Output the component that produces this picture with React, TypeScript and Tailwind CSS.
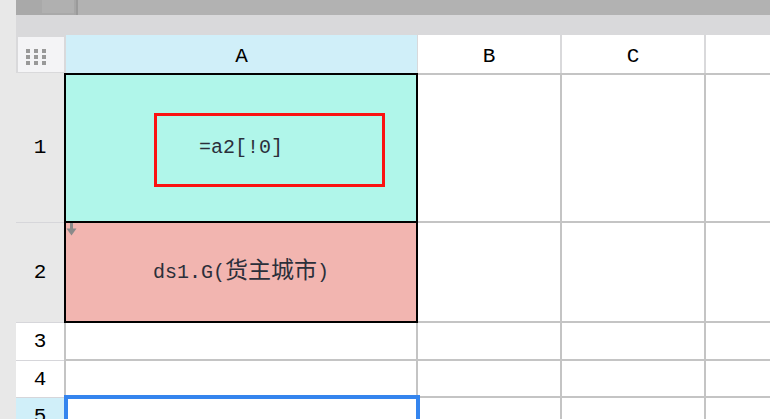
import React from "react";

const mono = "font-['Liberation_Mono','Noto_Sans_CJK_SC',monospace]";

const RowHead: React.FC<{ n: number; bg: string; h: string }> = ({ n, bg, h }) => (
  <div
    className={`flex w-12 shrink-0 items-center justify-center border-b border-[#d6d6da] text-[21px] leading-none text-black ${bg} ${h} ${mono}`}
  >
    {n}
  </div>
);

const ArrowDown: React.FC = () => (
  <svg width="11" height="13" viewBox="0 0 11 13" className="absolute left-0 top-0">
    <rect x="4" y="0" width="3" height="9" fill="#8a8a8a" />
    <polygon points="0.5,5.5 10.5,5.5 5.5,12.5" fill="#8a8a8a" />
  </svg>
);

const App: React.FC = () => {
  return (
    <div className="flex h-[419px] w-[770px] overflow-hidden bg-[#e8e8e8]">
      {/* left strip */}
      <div className="w-4 shrink-0 bg-[#e8e8e8]" />

      <div className="flex flex-1 flex-col">
        {/* toolbar remnant */}
        <div className="flex h-[15px] shrink-0 bg-[#b2b2b2]">
          <div className="w-[26px] bg-[#a9a9a9]" />
          <div className="flex w-[32px] flex-col bg-[#a9a9a9]">
            <div className="h-[13px] bg-[#b0b0b0]" />
          </div>
          <div className="w-[2px] bg-[#a6a6a6]" />
          <div className="w-[2px] bg-[#9a9a9a]" />
        </div>
        <div className="h-5 shrink-0 bg-[#d9d9db]" />

        {/* column header */}
        <div className={`flex h-[38px] shrink-0 bg-[#d9d9db] text-[21px] leading-none text-black ${mono}`}>
          <div className="mb-[1px] ml-[2px] mt-[2px] w-[46px] bg-[#f4f4f6] pl-2 pt-3">
            <div className="grid w-fit grid-cols-3 gap-x-1 gap-y-[2px]">
              {Array.from({ length: 9 }).map((_, i) => (
                <div key={i} className="h-1 w-1 bg-[#999999]" />
              ))}
            </div>
          </div>
          <div className="ml-[2px] flex w-[351px] items-center justify-center bg-[#d0eff9] pt-1">A</div>
          <div className="ml-[1px] flex w-[142px] items-center justify-center bg-white pt-1">B</div>
          <div className="ml-[2px] flex w-[142px] items-center justify-center bg-white pt-1">C</div>
          <div className="ml-[2px] flex-1 bg-white" />
        </div>

        {/* row 1 */}
        <div className="flex h-[150px] shrink-0">
          <RowHead n={1} bg="bg-[#e8e8e8]" h="h-[150px]" />
          <div className="relative flex w-[354px] items-center justify-center border-2 border-black bg-[#b0f6ea]">
            <span className={`text-[20px] leading-none text-[#2b2f3a] ${mono}`}>=a2[!0]</span>
            <div className="absolute left-[88px] top-[38px] h-[74px] w-[231px] border-[3px] border-[#fb1212]" />
          </div>
          <div className="w-[144px] border-y-2 border-r-2 border-[#c4c4c4] bg-white" />
          <div className="w-[144px] border-y-2 border-r-2 border-[#c4c4c4] bg-white" />
          <div className="flex-1 border-y-2 border-[#c4c4c4] bg-white" />
        </div>

        {/* row 2 */}
        <div className="flex h-[100px] shrink-0">
          <RowHead n={2} bg="bg-[#e8e8e8]" h="h-[100px]" />
          <div className="relative flex w-[354px] items-center justify-center border-x-2 border-b-2 border-black bg-[#f2b5b0]">
            <ArrowDown />
            <span className={`text-[20px] leading-none text-[#2b2f3a] ${mono}`}>
              ds1.G(<span className="text-[23px]">货主城市</span>)
            </span>
          </div>
          <div className="w-[144px] border-b-2 border-r-2 border-[#c4c4c4] bg-white" />
          <div className="w-[144px] border-b-2 border-r-2 border-[#c4c4c4] bg-white" />
          <div className="flex-1 border-b-2 border-[#c4c4c4] bg-white" />
        </div>

        {/* row 3 */}
        <div className="flex h-[38px] shrink-0">
          <RowHead n={3} bg="bg-white" h="h-[38px]" />
          <div className="w-[354px] border-b-2 border-l-2 border-r-2 border-[#c4c4c4] bg-white" />
          <div className="w-[144px] border-b-2 border-r-2 border-[#c4c4c4] bg-white" />
          <div className="w-[144px] border-b-2 border-r-2 border-[#c4c4c4] bg-white" />
          <div className="flex-1 border-b-2 border-[#c4c4c4] bg-white" />
        </div>

        {/* row 4 */}
        <div className="flex h-[37px] shrink-0">
          <RowHead n={4} bg="bg-white" h="h-[37px]" />
          <div className="w-[354px] border-b-2 border-l-2 border-r-2 border-[#c4c4c4] bg-white" />
          <div className="w-[144px] border-b-2 border-r-2 border-[#c4c4c4] bg-white" />
          <div className="w-[144px] border-b-2 border-r-2 border-[#c4c4c4] bg-white" />
          <div className="flex-1 border-b-2 border-[#c4c4c4] bg-white" />
        </div>

        {/* row 5 (selected) */}
        <div className="flex h-[38px] shrink-0">
          <RowHead n={5} bg="bg-[#d0eff9]" h="h-[38px]" />
          <div className="relative w-[354px] border-r-2 border-[#c4c4c4] bg-white">
            <div className="absolute -top-[3px] left-0 h-[44px] w-[356px] border-4 border-[#3585ee]" />
          </div>
          <div className="w-[144px] border-r-2 border-[#c4c4c4] bg-white" />
          <div className="w-[144px] border-r-2 border-[#c4c4c4] bg-white" />
          <div className="flex-1 bg-white" />
        </div>
      </div>
    </div>
  );
};

export default App;
